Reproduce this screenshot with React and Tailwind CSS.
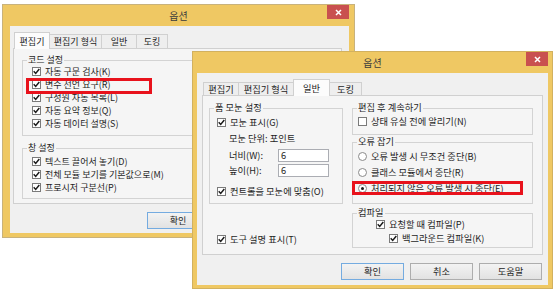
import React from 'react';

function Check({ on = true }) {
  return (
    <span className="w-[9px] h-[9px] shrink-0 border border-[#7a7a7a] bg-white flex items-center justify-center">
      {on && (
        <svg width="7" height="7" viewBox="0 0 7 7">
          <path d="M0.7 3.3 L2.7 5.4 L6.3 1.1" stroke="#1a1a1a" strokeWidth="1.5" fill="none" />
        </svg>
      )}
    </span>
  );
}

function Radio({ on = false }) {
  return (
    <span className="w-[9px] h-[9px] shrink-0 rounded-full border border-[#8a8a8a] bg-white flex items-center justify-center">
      {on && <span className="w-[3px] h-[3px] rounded-full bg-[#1a1a1a]" />}
    </span>
  );
}

function Group({ label, className, children }) {
  return (
    <div className={`border border-[#d3d3d3] flex flex-col ${className}`}>
      <span className="-mt-[7px] ml-[4px] px-[1px] h-[11px] leading-[11px] w-fit bg-[#f5f5f5] whitespace-nowrap">{label}</span>
      {children}
    </div>
  );
}

function CloseBtn({ className }) {
  return (
    <div className={`absolute top-0 w-[22px] h-[14px] bg-[#c9504f] flex items-center justify-center ${className}`}>
      <svg width="7" height="7" viewBox="0 0 7 7">
        <path d="M1 1 L6 6 M6 1 L1 6" stroke="#ffffff" strokeWidth="1.5" />
      </svg>
    </div>
  );
}

function Btn({ children, def = false, className = '' }) {
  return (
    <div
      className={`h-[17px] shrink-0 flex items-center justify-center border ${
        def ? 'border-[#74abe0]' : 'border-[#adadad]'
      } bg-linear-to-b from-[#f3f3f3] to-[#e2e2e2] ${className}`}
    >
      {children}
    </div>
  );
}

export default function App() {
  return (
    <div className="relative w-[557px] h-[294px] bg-white overflow-hidden text-[#1e1e1e] leading-[11px] font-['Noto_Sans_CJK_KR','Noto_Sans',sans-serif]">
      {/* Back window */}
      <div className="absolute left-[2px] top-[4px] w-[353px] h-[234px] border border-[#c8b27c] bg-[#efc863] flex flex-col text-[9px]">
        <div className="relative h-[21px] shrink-0 flex items-center justify-center text-[10px] leading-[12px] text-[#3c3c3c]">
          옵션
          <CloseBtn className="right-[5px]" />
        </div>
        <div className="ml-[7px] mr-[5px] mb-[4px] flex-1 bg-[#f0f0f0] pt-[6px] pl-[3px] flex flex-col">
          <div className="flex items-end h-[16px] pl-[1px]">
            <div className="relative z-10 -mb-px h-[17px] w-[36px] bg-[#fcfcfc] border border-b-0 border-[#d0d0d0] flex items-center justify-center">편집기</div>
            <div className="h-[14px] w-[52px] bg-[#eeeeee] border-t border-r border-[#d0d0d0] flex items-center justify-center whitespace-nowrap">편집기 형식</div>
            <div className="h-[14px] w-[35px] bg-[#eeeeee] border-t border-r border-[#d0d0d0] flex items-center justify-center">일반</div>
            <div className="h-[14px] w-[31px] bg-[#eeeeee] border-t border-r border-[#d0d0d0] flex items-center justify-center">도킹</div>
          </div>
          <div className="w-[329px] h-[156px] shrink-0 border border-[#d0d0d0] bg-[#f5f5f5] pt-[11px] pl-[8px] flex flex-col gap-[12px]">
            <Group label="코드 설정" className="w-[312px] h-[76px] shrink-0">
              {['자동 구문 검사(K)', '변수 선언 요구(R)', '구성원 자동 목록(L)', '자동 요약 정보(Q)', '자동 데이터 설명(S)'].map((t) => (
                <div key={t} className="h-[13px] shrink-0 flex items-center gap-[4px] pl-[9px] whitespace-nowrap">
                  <Check />
                  <span>{t}</span>
                </div>
              ))}
            </Group>
            <Group label="창 설정" className="w-[312px] h-[51px] shrink-0">
              <div className="mt-[2px]" />
              {['텍스트 끌어서 놓기(D)', '전체 모듈 보기를 기본값으로(M)', '프로시저 구분선(P)'].map((t) => (
                <div key={t} className="h-[13px] shrink-0 flex items-center gap-[4px] pl-[9px] whitespace-nowrap">
                  <Check />
                  <span>{t}</span>
                </div>
              ))}
            </Group>
          </div>
          <div className="mt-[8px] ml-[134px] flex gap-[7px]">
            <Btn def className="w-[62px]">확인</Btn>
            <Btn className="w-[62px]">취소</Btn>
            <Btn className="w-[62px]">도움말</Btn>
          </div>
        </div>
      </div>

      {/* Front window */}
      <div className="absolute left-[192px] top-[51px] w-[361px] h-[238px] border border-[#d2b15f] bg-[#efc863] flex flex-col text-[9.25px]">
        <div className="relative h-[21px] shrink-0 flex items-center justify-center text-[10px] leading-[12px] text-[#3c3c3c]">
          옵션
          <CloseBtn className="right-[4px]" />
        </div>
        <div className="ml-[4px] mr-[4px] mb-[3px] flex-1 bg-[#f0f0f0] pt-[6px] pl-[5px] flex flex-col">
          <div className="flex items-end h-[16px] pl-[1px]">
            <div className="h-[13px] w-[35px] bg-[#eeeeee] border-t border-l border-[#d0d0d0] flex items-center justify-center">편집기</div>
            <div className="h-[13px] w-[55px] bg-[#eeeeee] border-t border-l border-[#d0d0d0] flex items-center justify-center whitespace-nowrap">편집기 형식</div>
            <div className="relative z-10 -mb-px h-[17px] w-[37px] bg-[#fcfcfc] border border-b-0 border-[#d0d0d0] flex items-center justify-center">일반</div>
            <div className="h-[13px] w-[32px] bg-[#eeeeee] border-t border-r border-[#d0d0d0] flex items-center justify-center">도킹</div>
          </div>
          <div className="w-[341px] h-[160px] shrink-0 border border-[#d0d0d0] bg-[#f5f5f5] pt-[12px] pl-[6px] flex gap-[9px]">
            {/* Left column */}
            <div className="w-[134px] flex flex-col">
              <Group label="폼 모눈 설정" className="w-[134px] h-[96px] shrink-0">
                <div className="mt-[3px] h-[13px] flex items-center gap-[4px] pl-[7px] whitespace-nowrap">
                  <Check />
                  <span>모눈 표시(G)</span>
                </div>
                <div className="mt-[3px] h-[13px] flex items-center pl-[19px] whitespace-nowrap">모눈 단위: 포인트</div>
                <div className="mt-[4px] h-[13px] flex items-center pl-[19px] whitespace-nowrap">
                  <span className="w-[49px]">너비(W):</span>
                  <div className="w-[51px] h-[13px] bg-white border border-[#abadb3] flex items-center pl-[2px]">6</div>
                </div>
                <div className="mt-[2px] h-[13px] flex items-center pl-[19px] whitespace-nowrap">
                  <span className="w-[49px]">높이(H):</span>
                  <div className="w-[51px] h-[13px] bg-white border border-[#abadb3] flex items-center pl-[2px]">6</div>
                </div>
                <div className="mt-[8px] h-[13px] flex items-center gap-[4px] pl-[7px] whitespace-nowrap">
                  <Check />
                  <span>컨트롤을 모눈에 맞춤(O)</span>
                </div>
              </Group>
              <div className="mt-[29px] h-[13px] flex items-center gap-[4px] pl-[8px] whitespace-nowrap">
                <Check />
                <span>도구 설명 표시(T)</span>
              </div>
            </div>
            {/* Right column */}
            <div className="w-[181px] flex flex-col">
              <Group label="편집 후 계속하기" className="w-[181px] h-[27px] shrink-0">
                <div className="mt-[2px] h-[13px] flex items-center gap-[4px] pl-[5px] whitespace-nowrap">
                  <Check on={false} />
                  <span>상태 유실 전에 알리기(N)</span>
                </div>
              </Group>
              <Group label="오류 잡기" className="mt-[7px] w-[181px] h-[62px] shrink-0">
                <div className="mt-[1px]" />
                {[
                  ['오류 발생 시 무조건 중단(B)', false],
                  ['클래스 모듈에서 중단(R)', false],
                  ['처리되지 않은 오류 발생 시 중단(E)', true],
                ].map(([t, on]) => (
                  <div key={t} className="h-[16px] shrink-0 flex items-center gap-[4px] pl-[5px] whitespace-nowrap">
                    <Radio on={on} />
                    <span>{t}</span>
                  </div>
                ))}
              </Group>
              <Group label="컴파일" className="mt-[9px] w-[181px] h-[35px] shrink-0">
                <div className="h-[12px] flex items-center gap-[4px] pl-[23px] whitespace-nowrap">
                  <Check />
                  <span>요청할 때 컴파일(P)</span>
                </div>
                <div className="mt-[2px] h-[12px] flex items-center gap-[4px] pl-[36px] whitespace-nowrap">
                  <Check />
                  <span>백그라운드 컴파일(K)</span>
                </div>
              </Group>
            </div>
          </div>
          <div className="mt-[8px] flex justify-end gap-[6px] pr-[6px]">
            <Btn def className="w-[63px]">확인</Btn>
            <Btn className="w-[63px]">취소</Btn>
            <Btn className="w-[63px]">도움말</Btn>
          </div>
        </div>
      </div>

      {/* Red annotation boxes */}
      <div className="absolute left-[26px] top-[78px] w-[126px] h-[16px] border-[3px] border-[#e8121c]" />
      <div className="absolute left-[352px] top-[181px] w-[171px] h-[14px] border-[3px] border-[#e8121c]" />
    </div>
  );
}
